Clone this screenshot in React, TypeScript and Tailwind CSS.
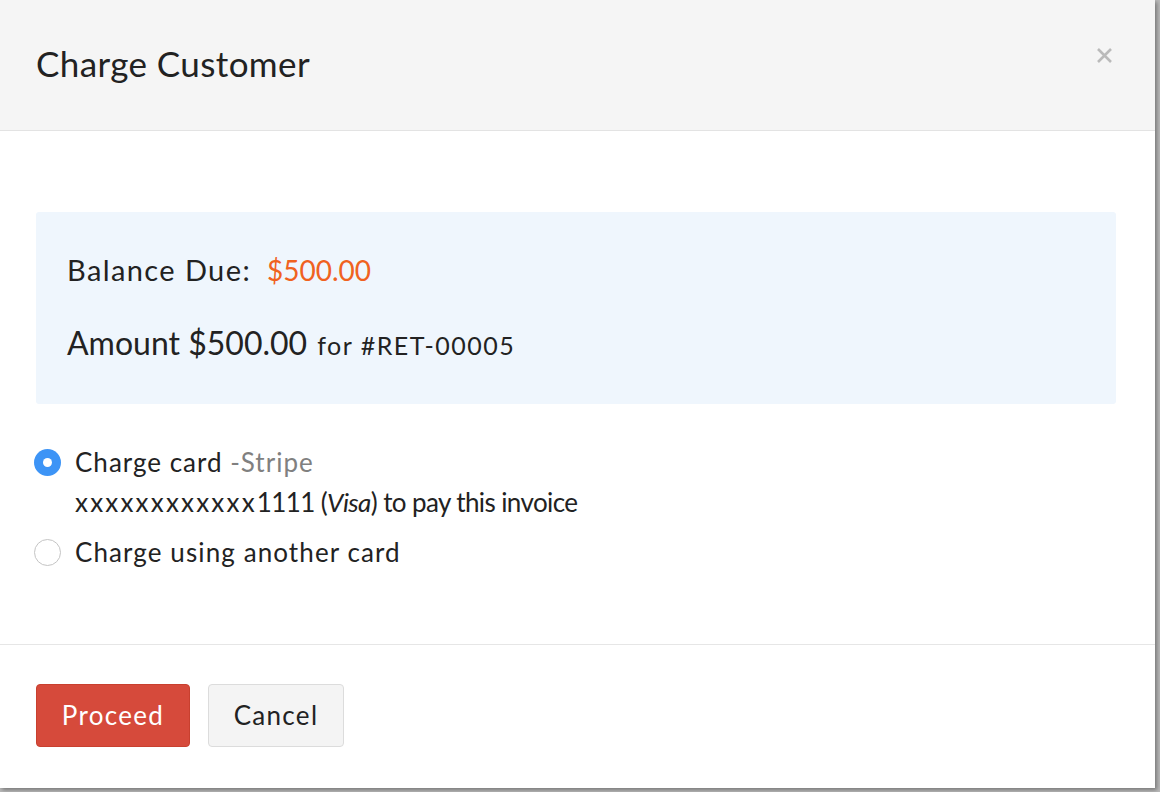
import React from "react";

export default function App() {
  const font = { fontFamily: "Lato, 'Noto Sans', sans-serif" };
  return (
    <div className="w-[1160px] h-[792px] bg-[#b9b9b9] overflow-hidden" style={font}>
      <div className="w-[1155px] h-[788px] bg-white flex flex-col shadow-[2px_2px_4px_rgba(0,0,0,0.35)]">
        <div className="h-[131px] bg-[#f5f5f5] border-b border-[#e3e3e3] flex items-start justify-between pl-[36px] pr-[42px] shrink-0">
          <h1 className="text-[35px] leading-none text-[#222] mt-[46px] font-normal tracking-[0.4px]">Charge Customer</h1>
          <svg className="mt-[47px]" width="17" height="17" viewBox="0 0 17 17">
            <path d="M2 2 L15 15 M15 2 L2 15" stroke="#bababa" strokeWidth="2.6" />
          </svg>
        </div>
        <div className="flex-1 px-[36px] pt-[81px]">
          <div className="w-[1080px] h-[192px] bg-[#eff6fd] rounded-[3px] pl-[31px] pt-[43px]">
            <div className="flex items-baseline text-[28px] leading-none text-[#222]">
              <span className="text-[29px] tracking-[1.4px]">Balance Due:</span>
              <span className="ml-[16px] text-[#f0621f]">$500.00</span>
            </div>
            <div className="flex items-baseline mt-[43px] text-[#222] leading-none">
              <span className="text-[32px]">Amount $500.00</span>
              <span className="ml-[10px] text-[25px] tracking-[1.5px]">for #RET-00005</span>
            </div>
          </div>
          <div className="mt-[44px] flex flex-col">
            <label className="flex items-start">
              <span className="mt-[1px] w-[27px] h-[27px] rounded-full bg-[#3d94f6] flex items-center justify-center shrink-0 -ml-[2px]">
                <span className="w-[9px] h-[9px] rounded-full bg-white" />
              </span>
              <span className="ml-[14px] flex flex-col text-[26px] leading-[40px] text-[#222] -mt-[6px]">
                <span className="tracking-[1px]">
                  Charge card <span className="text-[#808080]">-Stripe</span>
                </span>
                <span>
                  <span className="tracking-[2.2px]">xxxxxxxxxxxx</span>
                  <span className="tracking-[-0.6px]">1111 (<i>Visa</i>) to pay this invoice</span>
                </span>
              </span>
            </label>
            <label className="flex items-center mt-[10px]">
              <span className="w-[27px] h-[27px] rounded-full bg-white border border-[#c4c4c4] shrink-0 -ml-[2px]" />
              <span className="ml-[14px] text-[26px] leading-[40px] text-[#222] tracking-[1.1px]">Charge using another card</span>
            </label>
          </div>
        </div>
        <div className="h-[144px] border-t border-[#e6e6e6] flex items-start gap-[18px] px-[36px] pt-[39px] shrink-0">
          <button className="w-[154px] h-[63px] rounded-[4px] bg-[#d64a3b] border border-[#c8402f] text-white text-[26px] tracking-[1.3px]">Proceed</button>
          <button className="w-[136px] h-[63px] rounded-[4px] bg-[#f4f4f4] border border-[#dcdcdc] text-[#222] text-[26px] tracking-[1.3px]">Cancel</button>
        </div>
      </div>
    </div>
  );
}
